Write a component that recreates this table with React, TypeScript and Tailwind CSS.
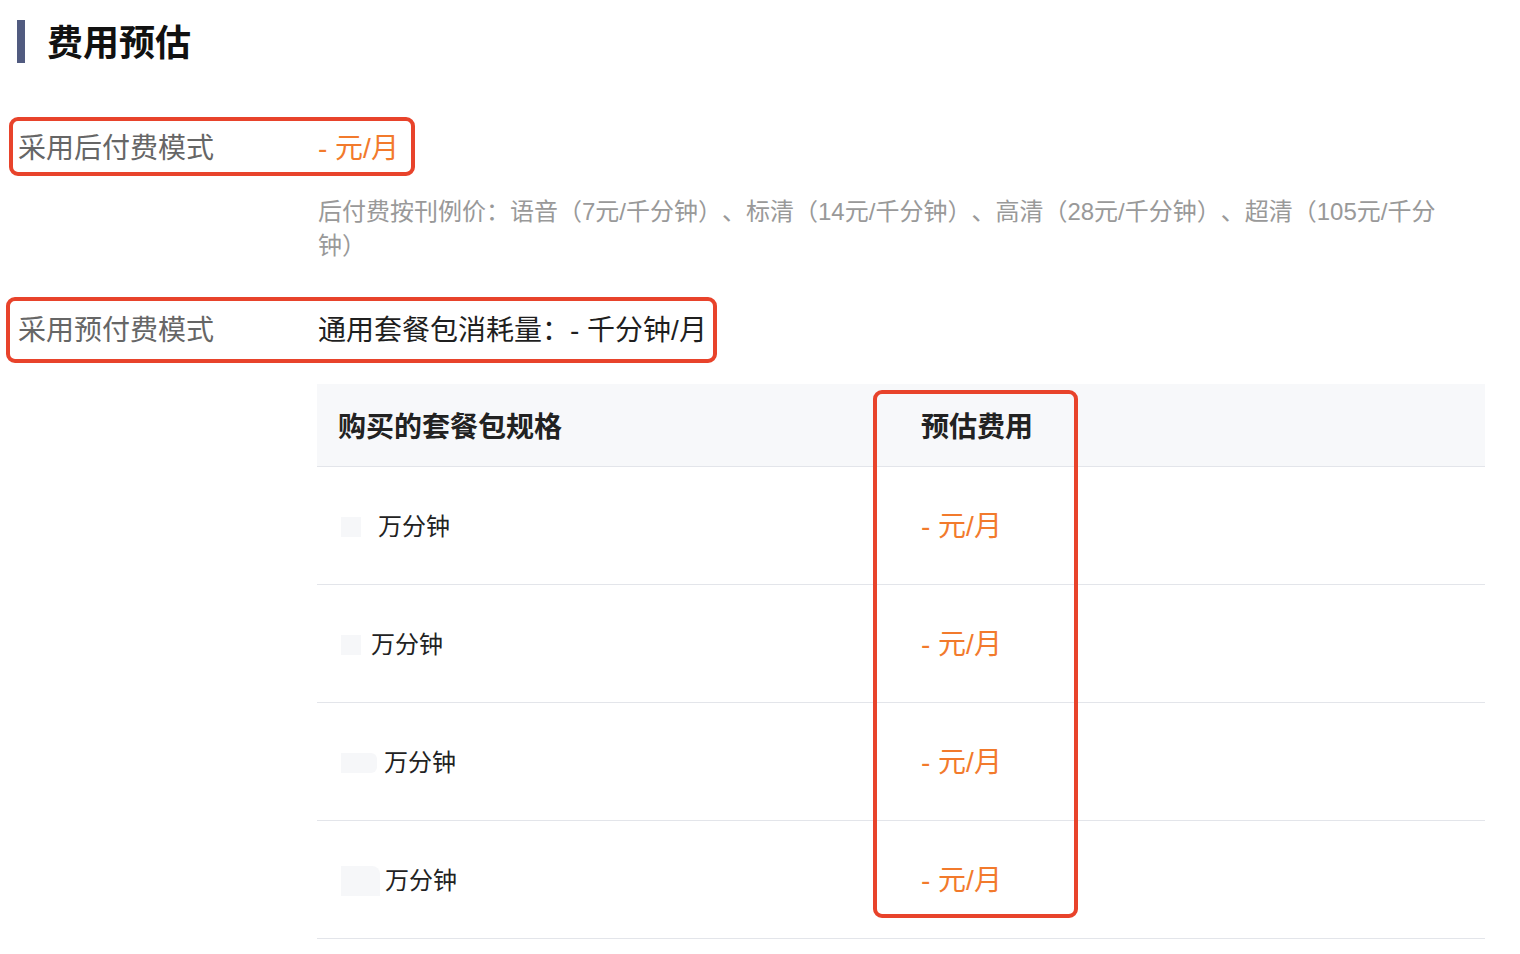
const font = 'font-["Liberation_Sans","Noto_Sans_CJK_SC",sans-serif] [text-spacing-trim:space-all]';

const rows = [
  { blur: 'w-[20px] h-[20px]', gap: 'ml-[17px]' },
  { blur: 'w-[20px] h-[20px]', gap: 'ml-[10px]' },
  { blur: 'w-[36px] h-[20px] rounded-r-[6px]', gap: 'ml-[7px]' },
  { blur: 'w-[39px] h-[30px] rounded-tr-[8px]', gap: 'ml-[5px]' },
];

export default function App() {
  return (
    <div className={`${font} bg-white w-[1520px] h-[954px] pt-[20px] overflow-hidden`}>
      {/* title */}
      <div className="flex items-center h-[43px]">
        <div className="ml-[17px] w-[8px] h-[43px] bg-[#515b80]"></div>
        <h1 className="ml-[22px] pt-[4px] text-[36px] leading-none font-bold text-[#111]">费用预估</h1>
      </div>

      {/* post-paid */}
      <div className="mt-[54px] ml-[9px] inline-flex items-center h-[59px] pt-[5px] pl-[5px] pr-[12px] border-[4px] border-[#e8432b] rounded-[9px]">
        <span className="w-[300px] text-[28px] text-[#666]">采用后付费模式</span>
        <span className="text-[28px] text-[#f27a2c]">- 元/月</span>
      </div>

      <p className="mt-[19px] ml-[318px] w-[1145px] text-[24px] leading-[34px] text-[#999]">
        后付费按刊例价：语音（7元/千分钟）、标清（14元/千分钟）、高清（28元/千分钟）、超清（105元/千分钟）
      </p>

      {/* pre-paid */}
      <div className="mt-[34px] ml-[6px] inline-flex items-center h-[66px] pt-[2px] pl-[8px] pr-[6px] border-[4px] border-[#e8432b] rounded-[9px]">
        <span className="w-[300px] text-[28px] text-[#666]">采用预付费模式</span>
        <span className="text-[28px] text-[#1f1f1f]">通用套餐包消耗量：- 千分钟/月</span>
      </div>

      {/* table */}
      <div className="relative mt-[21px] ml-[317px] w-[1168px]">
        <div className="grid grid-cols-2 h-[83px] pt-[6px] items-center bg-[#f7f8fa] border-b border-[#e3e5ea]">
          <div className="pl-[21px] text-[28px] font-bold text-[#222]">购买的套餐包规格</div>
          <div className="pl-[20px] text-[28px] font-bold text-[#222]">预估费用</div>
        </div>
        {rows.map((r, i) => (
          <div key={i} className="grid grid-cols-2 h-[118px] pt-[2px] items-center border-b border-[#e3e5ea]">
            <div className="pl-[24px] flex items-center">
              <div className={`${r.blur} bg-[#f6f7f9]`}></div>
              <span className={`${r.gap} text-[24px] text-[#222]`}>万分钟</span>
            </div>
            <div className="pl-[20px] text-[28px] text-[#f27a2c]">- 元/月</div>
          </div>
        ))}
        <div className="absolute left-[556px] top-[6px] w-[205px] h-[528px] border-[4px] border-[#e8432b] rounded-[9px]"></div>
      </div>
    </div>
  );
}
